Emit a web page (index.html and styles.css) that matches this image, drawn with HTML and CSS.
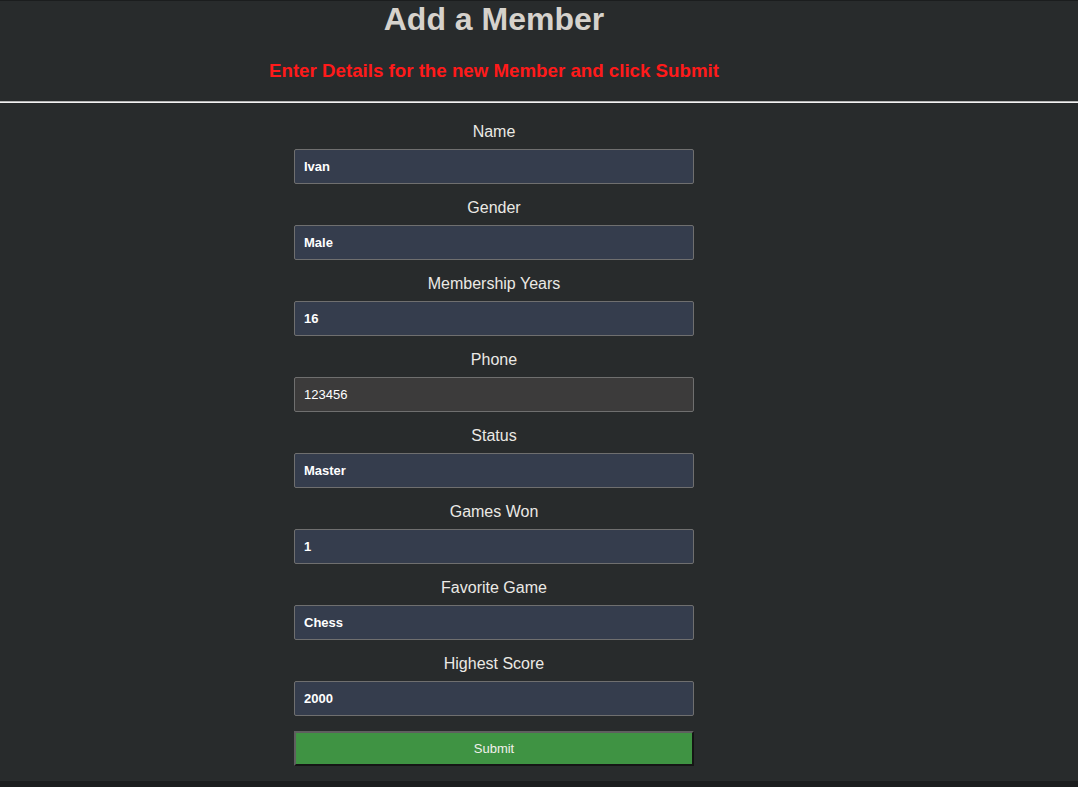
FILE: index.html
```html
<!DOCTYPE html>
<html lang="en">
<head>
<meta charset="utf-8">
<title>Add a Member</title>
<link rel="stylesheet" href="styles.css">
</head>
<body>
<div class="wrap">
  <header class="head">
    <h1 class="title">Add a Member</h1>
    <h3 class="subtitle">Enter Details for the new Member and click Submit</h3>
  </header>
  <hr class="rule">
  <form class="form">
    <div class="group">
      <label class="label">Name</label>
      <input class="field" type="text" value="Ivan">
    </div>
    <div class="group">
      <label class="label">Gender</label>
      <input class="field" type="text" value="Male">
    </div>
    <div class="group">
      <label class="label">Membership Years</label>
      <input class="field" type="text" value="16">
    </div>
    <div class="group">
      <label class="label">Phone</label>
      <input class="field field-phone" type="text" value="123456">
    </div>
    <div class="group">
      <label class="label">Status</label>
      <input class="field" type="text" value="Master">
    </div>
    <div class="group">
      <label class="label">Games Won</label>
      <input class="field" type="text" value="1">
    </div>
    <div class="group">
      <label class="label">Favorite Game</label>
      <input class="field" type="text" value="Chess">
    </div>
    <div class="group">
      <label class="label">Highest Score</label>
      <input class="field" type="text" value="2000">
    </div>
    <button class="submit" type="button">Submit</button>
  </form>
</div>
</body>
</html>
```
FILE: styles.css
```css
html, body {
  margin: 0;
  padding: 0;
  background: #1b1d1e;
  font-family: "Liberation Sans", Arial, sans-serif;
}
.wrap {
  margin-top: 1px;
  background: #282b2c;
  height: 780px;
  box-sizing: border-box;
}
.head {
  width: 988px;
  text-align: center;
}
.title {
  margin: 0;
  font-size: 32px;
  line-height: 37px;
  font-weight: bold;
  color: #d6d2cc;
}
.subtitle {
  margin: 22px 0 0;
  font-size: 18.72px;
  line-height: 21px;
  font-weight: bold;
  color: #ff1a1a;
}
.rule {
  margin: 20px 0 0;
  border: 0;
  border-top: 1px solid #b5b5b5;
  border-bottom: 1px solid #f2f2f2;
  height: 0;
}
.form {
  width: 988px;
  padding-top: 20px;
  display: flex;
  flex-direction: column;
  align-items: center;
  gap: 15px;
}
.group {
  width: 400px;
  display: flex;
  flex-direction: column;
  align-items: center;
  gap: 8px;
}
.label {
  font-size: 16px;
  line-height: 18px;
  color: #ebe9e5;
}
.field {
  width: 400px;
  height: 35px;
  box-sizing: border-box;
  margin: 0;
  padding: 0 9px;
  border: 1px solid #6f6f6f;
  border-radius: 2px;
  background: #353d4d;
  color: #ffffff;
  font-family: "Liberation Sans", Arial, sans-serif;
  font-size: 13px;
  font-weight: bold;
  outline: none;
}
.field-phone {
  background: #3c3b3b;
  font-weight: normal;
}
.submit {
  width: 400px;
  height: 35px;
  box-sizing: border-box;
  border: 2px solid;
  border-color: #5f5f5f #151515 #151515 #5f5f5f;
  background: #3f9343;
  color: #f2f0ec;
  font-family: "Liberation Sans", Arial, sans-serif;
  font-size: 13px;
  padding: 0;
}
```
